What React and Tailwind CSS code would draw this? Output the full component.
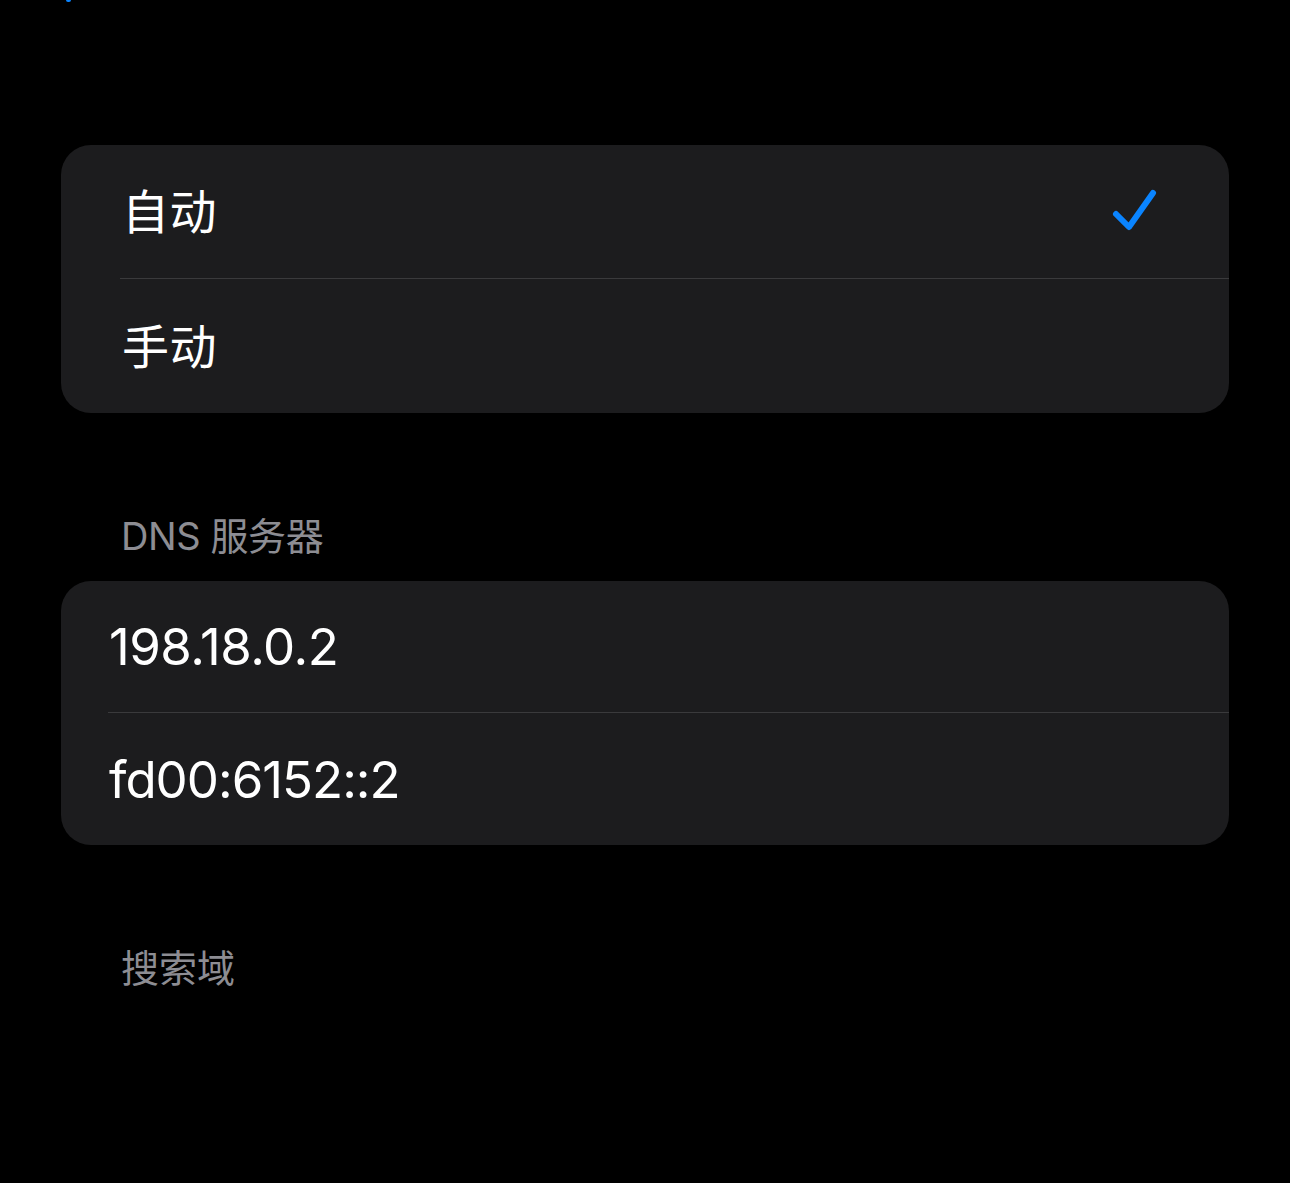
import React from "react";

const font = { fontFamily: 'Inter, "Noto Sans CJK SC", sans-serif' };

function Check() {
  return (
    <svg width="50" height="50" viewBox="0 0 50 50" className="block">
      <polyline
        points="5,26 18,39 42,5"
        fill="none"
        stroke="#0a84ff"
        strokeWidth="6"
        strokeLinecap="round"
        strokeLinejoin="round"
      />
    </svg>
  );
}

export default function App() {
  return (
    <div
      className="w-[1290px] h-[1183px] bg-black text-white overflow-hidden flex flex-col"
      style={font}
    >
      <div className="h-[145px] relative">
        <div className="absolute left-[66px] top-0 w-[5px] h-[2px] bg-[#0a84ff] rounded-b-sm" />
      </div>

      <div className="mx-[61px] rounded-[30px] bg-[#1c1c1e] flex flex-col">
        <div className="h-[133px] flex items-center pl-[61px] pr-[68px]">
          <span className="text-[47px] leading-none tracking-[0.5px] flex-1">自动</span>
          <div className="mt-[2px]">
            <Check />
          </div>
        </div>
        <div className="ml-[59px] h-px bg-[#3a3a3c]" />
        <div className="h-[134px] flex items-center pl-[61px]">
          <span className="text-[47px] leading-none tracking-[0.5px]">手动</span>
        </div>
      </div>

      <div className="h-[168px] flex items-end pl-[121px] pb-[26px]">
        <span className="text-[38px] leading-none tracking-[-0.4px] text-[#8d8d93]">DNS 服务器</span>
      </div>

      <div className="mx-[61px] rounded-[30px] bg-[#1c1c1e] flex flex-col">
        <div className="h-[131px] flex items-center pl-[48px]">
          <span className="text-[51px] leading-none tracking-[-0.5px]">198.18.0.2</span>
        </div>
        <div className="ml-[47px] h-px bg-[#3a3a3c]" />
        <div className="h-[132px] flex items-center pl-[48px]">
          <span className="text-[51px] leading-none tracking-[-1px]">fd00:6152::2</span>
        </div>
      </div>

      <div className="h-[142px] flex items-end pl-[121px]">
        <span className="text-[38px] leading-none text-[#8d8d93]">搜索域</span>
      </div>
    </div>
  );
}
